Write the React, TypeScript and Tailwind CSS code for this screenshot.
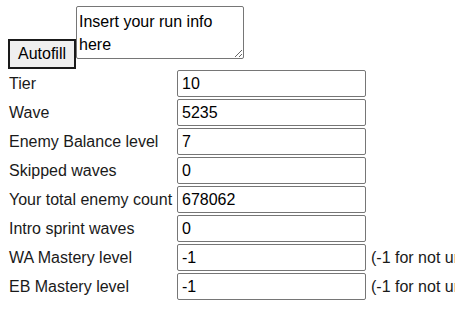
const ROWS: { label: string; value: string; note?: string }[] = [
  { label: 'Tier', value: '10' },
  { label: 'Wave', value: '5235' },
  { label: 'Enemy Balance level', value: '7' },
  { label: 'Skipped waves', value: '0' },
  { label: 'Your total enemy count', value: '678062' },
  { label: 'Intro sprint waves', value: '0' },
  { label: 'WA Mastery level', value: '-1', note: '(-1 for not unlocked)' },
  { label: 'EB Mastery level', value: '-1', note: '(-1 for not unlocked)' },
];

export default function App() {
  return (
    <div
      className="w-[455px] h-[335px] overflow-hidden bg-white text-black text-[16px] px-2"
      style={{ fontFamily: '"Liberation Sans", Arial, sans-serif' }}
    >
      <div className="flex items-start">
        <button className="mt-[39px] h-[30px] w-[68px] border-2 border-[#1a1a1a] bg-[#efefef] text-[16px] leading-none text-black">
          Autofill
        </button>
        <textarea
          defaultValue="Insert your run info here"
          className="mt-[6px] w-[168px] h-[53px] border border-[#767676] rounded-[2px] px-[2px] pt-[3px] pb-0 text-[16px] leading-[23px] text-black outline-none resize"
        />
      </div>
      <div className="grid grid-cols-[168px_190px_auto] whitespace-nowrap">
        {ROWS.map(row => (
          <div key={row.label} className="contents">
            <div className="h-[29px] px-px flex items-center text-[#1a1a1a]">{row.label}</div>
            <div className="h-[29px] p-px">
              <input
                defaultValue={row.value}
                className="w-[189px] h-[27px] border border-[#767676] rounded-[2px] px-[4px] text-[16px] text-black outline-none"
              />
            </div>
            <div className="h-[29px] pl-[5px] flex items-center text-[#1a1a1a]">{row.note ?? ''}</div>
          </div>
        ))}
      </div>
    </div>
  );
}
